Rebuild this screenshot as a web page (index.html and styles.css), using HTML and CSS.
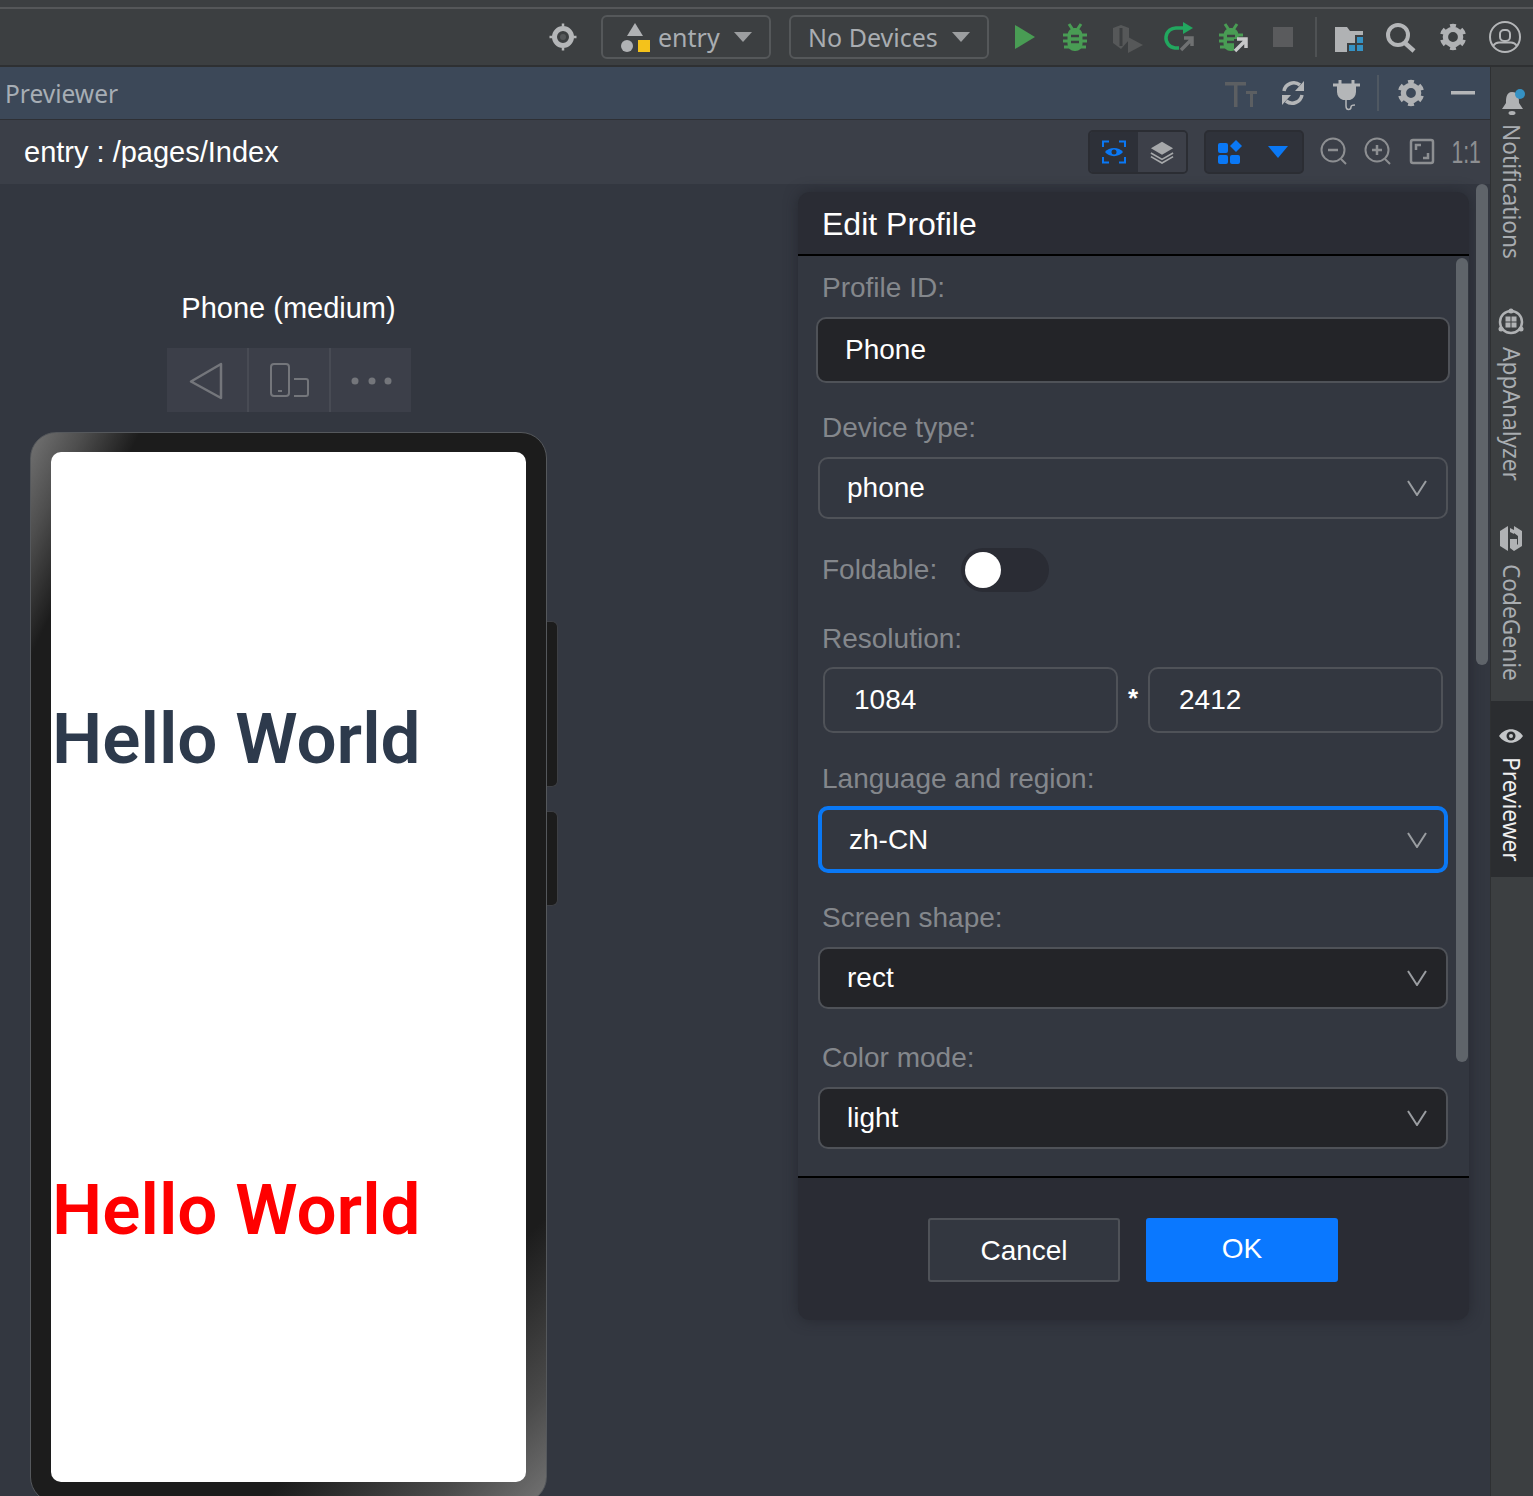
FILE: index.html
```html
<!DOCTYPE html>
<html lang="en">
<head>
<meta charset="utf-8">
<title>Previewer</title>
<link rel="stylesheet" href="styles.css">
</head>
<body>
<svg class="defs" aria-hidden="true">
  <symbol id="gear" viewBox="0 0 28 28">
    <circle cx="14" cy="14" r="7.6" fill="none" stroke="currentColor" stroke-width="5.400"/>
    <circle cx="14" cy="14" r="10.800" fill="none" stroke="currentColor" stroke-width="4.800" pathLength="60" stroke-dasharray="5 5" stroke-dashoffset="-2.5"/>
  </symbol>
  <symbol id="bug" viewBox="0 0 24 28">
    <path d="M6 1l4 6M18 1l-4 6M0 12h24M0 18h24M1 24h22" stroke="currentColor" stroke-width="3" fill="none"/>
    <rect x="4.500" y="5" width="15" height="23" rx="7" fill="currentColor"/>
    <path d="M8 13h8M8 19h8" stroke="#3c3f41" stroke-width="2.500"/>
  </symbol>
  <symbol id="chev" viewBox="0 0 20 16">
    <path d="M1 1l9 14 9-14" fill="none" stroke="#9a9da1" stroke-width="2"/>
  </symbol>
</svg>

<header class="toolbar-top"><div class="rule"></div>
  <div class="toolbar">
    <svg class="slot" viewBox="0 0 52 44"><g fill="none" stroke="#b4b6b8"><circle cx="26" cy="22" r="8.500" stroke-width="5"/><path d="M26 8.500v3M26 32.500v3M12.500 22h3M36.500 22h3" stroke-width="2.500"/></g><circle cx="26" cy="22" r="3" fill="#55585a"/></svg>
    <div class="combo combo-entry">
      <svg class="entry-ic" viewBox="0 0 30 32"><path d="M14 0l8 13H6z" fill="#b0b2b4"/><circle cx="6" cy="23" r="6" fill="#b0b2b4"/><rect x="17" y="17" width="12" height="12" fill="#f4c21b"/></svg>
      <span>entry</span><i class="caret"></i>
    </div>
    <div class="combo combo-dev"><span>No Devices</span><i class="caret"></i></div>
    <svg class="slot s-run" viewBox="0 0 52 44"><path d="M18 10l20 12-20 12z" fill="#499c54"/></svg>
    <svg class="slot" viewBox="0 0 52 44"><use href="#bug" x="14" y="8" width="24" height="28" color="#499c54"/></svg>
    <svg class="slot" viewBox="0 0 52 44"><path d="M12 13l8-3 8 3v12l-8 9-8-6z" fill="#565859"/><path d="M20 13v18" stroke="#3c3f41" stroke-width="3"/><path d="M27 22l15 8-15 8z" fill="#565859"/></svg>
    <svg class="slot" viewBox="0 0 52 44"><path d="M32 13h-8a10 10 0 0 0-2 20h4" fill="none" stroke="#22a75f" stroke-width="3.500"/><path d="M30 7l10 6-10 6z" fill="#22a75f"/><path d="M28 35l10-10M31 23h8v8" fill="none" stroke="#6f7172" stroke-width="3.500"/></svg>
    <svg class="slot s-attach" viewBox="0 0 52 44"><use href="#bug" x="14" y="8" width="24" height="28" color="#499c54"/><path d="M29 24h16v14H29z" fill="#3c3f41"/><path d="M30 36l10-10M32 24h9v9" fill="none" stroke="#c7c8c9" stroke-width="3.500"/></svg>
    <svg class="slot" viewBox="0 0 52 44"><rect x="16" y="12" width="20" height="20" fill="#5a5b5d"/></svg>
    <i class="tb-div"></i>
    <svg class="slot" viewBox="0 0 52 44"><path d="M12 12h12l3 4h13v21H12z" fill="#b0b2b4"/><path d="M24 28h18v12H24zM32 20h10v8H32z" fill="#3c3f41"/><path d="M34 22h6v6h-6zM26 30h6v6h-6zM34 30h6v6h-6z" fill="#3592c4"/></svg>
    <svg class="slot" viewBox="0 0 52 44"><circle cx="23" cy="20" r="10" fill="none" stroke="#b4b6b8" stroke-width="4"/><path d="M30 28l9 8" stroke="#b4b6b8" stroke-width="4.500"/></svg>
    <svg class="slot" viewBox="0 0 52 44"><use href="#gear" x="12" y="8" width="28" height="28" color="#b0b2b4"/></svg>
    <svg class="slot" viewBox="0 0 52 44"><g fill="none" stroke="#b4b6b8" stroke-width="2"><circle cx="26" cy="22" r="15"/><rect x="21" y="15" width="10" height="11" rx="4"/><path d="M14 31c2-3 4-3.500 6-3.500h12c2 0 4 .5 6 3.500"/></g></svg>
  </div>
</header>

<div class="main">
  <div class="workspace">
    <div class="panel-head">
      <span class="panel-title">Previewer</span>
      <svg class="slot" viewBox="0 0 52 44"><path d="M10 11h21v3.500H22.500V36H19V14.500H10z" fill="#5c5f62"/><path d="M31 20h11v3h-4v13h-3V23h-4z" fill="#5c5f62"/></svg>
      <svg class="slot" viewBox="0 0 52 44"><g fill="none" stroke="#b4b6b8" stroke-width="3.500"><path d="M17 20a10 10 0 0 1 16-6"/><path d="M35 24a10 10 0 0 1-16 6"/></g><path d="M37 10v10h-9zM15 34V24h9z" fill="#b4b6b8"/></svg>
      <svg class="slot" viewBox="0 0 52 44"><path d="M14 14h27M21 9v5M34 9v5" stroke="#b4b6b8" stroke-width="3"/><path d="M18 15h19v6a9 9 0 0 1-6 8h-7a9 9 0 0 1-6-8z" fill="#b4b6b8"/><path d="M27 29v6c0 5 5 4 5 1 0-2 2-2 4-2" fill="none" stroke="#b4b6b8" stroke-width="1.500"/></svg>
      <i class="head-div"></i>
      <svg class="slot" viewBox="0 0 52 44"><use href="#gear" x="12" y="8" width="28" height="28" color="#b0b2b4"/></svg>
      <svg class="slot" viewBox="0 0 52 44"><rect x="14" y="20" width="24" height="3.500" fill="#b4b6b8"/></svg>
    </div>

    <div class="crumbs">
      <span class="crumb-text">entry : /pages/Index</span>
      <div class="seg seg-view">
        <div class="seg-cell seg-on"><svg class="seg-ic" viewBox="0 0 24 24"><path d="M1 7V1.500h6M17 1.500h6V7M23 17v5.500h-6M7 22.500H1V17" fill="none" stroke="#0a78f5" stroke-width="2"/><path d="M3 12c4-5.500 14-5.500 18 0-4 5.500-14 5.500-18 0z" fill="#0a78f5"/><circle cx="12" cy="12" r="2.500" fill="#2d3038"/></svg></div>
        <div class="seg-cell"><svg class="seg-ic" viewBox="0 0 26 24"><path d="M13 1l12 7-12 7-12-7z" fill="#a6a8aa"/><path d="M1 13l12 7 12-7M1 17l12 7 12-7" fill="none" stroke="#a6a8aa" stroke-width="1.800"/></svg></div>
      </div>
      <div class="seg seg-dev">
        <div class="seg-cell"><svg class="seg-ic" viewBox="0 0 24 24"><rect x="0" y="3" width="10" height="10" rx="2" fill="#0a78f5"/><rect x="0" y="15" width="10" height="9" rx="2" fill="#0a78f5"/><rect x="12" y="15" width="10" height="9" rx="2" fill="#0a78f5"/><path d="M18 0l6 6-6 6-6-6z" fill="#0a78f5"/></svg></div>
        <div class="seg-cell"><svg class="seg-ic" viewBox="0 0 24 24"><path d="M2 6h20L12 18z" fill="#0a78f5"/></svg></div>
      </div>
      <svg class="zoom-ic" viewBox="0 0 44 44"><g fill="none" stroke="#8d8f92" stroke-width="2"><circle cx="21" cy="20" r="11.500"/><path d="M29 29l5 5"/><path d="M16 20h10" stroke-width="2.500"/></g></svg>
      <svg class="zoom-ic" viewBox="0 0 44 44"><g fill="none" stroke="#8d8f92" stroke-width="2"><circle cx="21" cy="20" r="11.500"/><path d="M29 29l5 5"/><path d="M16 20h10M21 15v10" stroke-width="2.500"/></g></svg>
      <svg class="zoom-ic" viewBox="0 0 44 44"><rect x="11" y="10" width="22" height="23" rx="2" fill="none" stroke="#8d8f92" stroke-width="2.500"/><path d="M16 20v-5h5M28 23v5h-5" fill="none" stroke="#8d8f92" stroke-width="2.500"/></svg>
      <span class="one-one">1:1</span>
    </div>

    <div class="content">
      <section class="stage">
        <div class="device-name">Phone (medium)</div>
        <div class="device-tools">
          <div class="tool"><svg class="tool-ic" viewBox="0 0 44 44"><path d="M36 6L6 23.500 36 40z" fill="none" stroke="#74767b" stroke-width="2.500" stroke-linejoin="round"/></svg></div>
          <div class="tool"><svg class="tool-ic" viewBox="0 0 44 44"><rect x="4" y="6" width="18" height="32" rx="3" fill="none" stroke="#74767b" stroke-width="2"/><path d="M11 33h4" stroke="#74767b" stroke-width="2"/><path d="M27 21h12a2 2 0 0 1 2 2v13a2 2 0 0 1-2 2H27" fill="none" stroke="#74767b" stroke-width="2"/></svg></div>
          <div class="tool"><svg class="tool-ic" viewBox="0 0 44 44"><circle cx="6" cy="23" r="3.500" fill="#74767b"/><circle cx="23" cy="23" r="3.500" fill="#74767b"/><circle cx="39" cy="23" r="3.500" fill="#74767b"/></svg></div>
        </div>
        <div class="phone-row">
          <div class="phone">
            <div class="screen">
              <p class="hello hello-dark">Hello World</p>
              <p class="hello hello-red">Hello World</p>
            </div>
          </div>
          <div class="side-keys"><i class="key key-long"></i><i class="key key-short"></i></div>
        </div>
      </section>

      <section class="dialog">
        <h2 class="dlg-title">Edit Profile</h2>
        <div class="dlg-body">
          <i class="dlg-scroll"></i>
          <label class="lbl lbl-first">Profile ID:</label>
          <div class="ctl ctl-input ctl-dark"><span>Phone</span></div>
          <label class="lbl lbl-device">Device type:</label>
          <div class="ctl ctl-select"><span>phone</span><svg class="chev"><use href="#chev"/></svg></div>
          <div class="fold-row"><label class="lbl-inline">Foldable:</label><div class="toggle"><i class="knob"></i></div></div>
          <label class="lbl lbl-res">Resolution:</label>
          <div class="res-row">
            <div class="res-box">1084</div>
            <span class="res-x">*</span>
            <div class="res-box">2412</div>
          </div>
          <label class="lbl lbl-lang">Language and region:</label>
          <div class="ctl ctl-select ctl-focus"><span>zh-CN</span><svg class="chev"><use href="#chev"/></svg></div>
          <label class="lbl lbl-shape">Screen shape:</label>
          <div class="ctl ctl-select ctl-dark"><span>rect</span><svg class="chev"><use href="#chev"/></svg></div>
          <label class="lbl lbl-color">Color mode:</label>
          <div class="ctl ctl-select ctl-dark"><span>light</span><svg class="chev"><use href="#chev"/></svg></div>
        </div>
        <div class="dlg-foot">
          <button class="btn btn-cancel">Cancel</button>
          <button class="btn btn-ok">OK</button>
        </div>
      </section>

      <i class="outer-scroll"></i>
    </div>
  </div>

  <aside class="strip">
    <div class="strip-item it-notif">
      <svg class="st-ic st-bell" viewBox="0 0 26 28"><path d="M12 4C6 4 6 11 6 15l-4 6h21l-4-6c0-4 0-11-7-11z" fill="#b0b2b4"/><ellipse cx="12" cy="25" rx="3.500" ry="2" fill="#b0b2b4"/><circle cx="20" cy="6" r="5" fill="#3592c4"/></svg>
      <span class="st-text">Notifications</span>
    </div>
    <div class="strip-item it-app">
      <svg class="st-ic st-app" viewBox="0 0 28 28"><circle cx="14" cy="14" r="11" fill="none" stroke="#b0b2b4" stroke-width="2.500"/><circle cx="14" cy="3" r="2.500" fill="#b0b2b4"/><circle cx="4" cy="21" r="2.500" fill="#b0b2b4"/><circle cx="24" cy="21" r="2.500" fill="#b0b2b4"/><path d="M8.500 8.500h5v5h-5zM14.500 8.500h5v5h-5zM8.500 14.500h5v5h-5zM14.500 14.500h5v5h-5z" fill="#b0b2b4"/></svg>
      <span class="st-text">AppAnalyzer</span>
    </div>
    <div class="strip-item it-genie">
      <svg class="st-ic st-genie" viewBox="0 0 24 26"><path d="M9 0v25l-8-5V5z" fill="#b0b2b4"/><path d="M11 2l4 2v4l-4-2z" fill="#b0b2b4"/><path d="M15 0l8 5v15l-8 5-4-3v-9h7v6l1-1v-8l-4-3z" fill="#b0b2b4"/></svg>
      <span class="st-text">CodeGenie</span>
    </div>
    <div class="strip-item it-prev">
      <svg class="st-ic st-eye" viewBox="0 0 26 16"><path d="M1 8c6-9 18-9 24 0-6 9-18 9-24 0z" fill="#c4c6c8"/><circle cx="13" cy="8" r="4.500" fill="#2b2d30"/><circle cx="13" cy="8" r="2" fill="#c4c6c8"/></svg>
      <span class="st-text st-active">Previewer</span>
    </div>
  </aside>
</div>
</body>
</html>
```

FILE: styles.css
```css
* { box-sizing: border-box; }
html, body { margin: 0; padding: 0; }
body {
  width: 1533px;
  height: 1496px;
  overflow: hidden;
  background: #333740;
  font-family: "Liberation Sans", Arial, sans-serif;
  color: #fff;
}
.defs { position: absolute; width: 0; height: 0; }
.slot { width: 52px; height: 44px; flex: none; display: block; }

/* top toolbar */
.toolbar-top { height: 67px; background: #3c3f41; border-bottom: 2px solid #2e3032; padding-top: 7px; }
.rule { height: 2px; background: #555759; }
.toolbar { display: flex; align-items: center; justify-content: flex-end; height: 56px; padding: 0 2px 0 0; }
.combo {
  display: flex; align-items: center; height: 44px; margin-right: 18px;
  border: 2px solid #55585a; border-radius: 6px;
  font-family: "Noto Sans", sans-serif; font-size: 25px; color: #a9adb1;
}
.combo-entry { width: 170px; padding-left: 18px; margin-left: 12px; }
.combo-dev { width: 200px; padding-left: 17px; margin-right: 8px; }
.entry-ic { width: 30px; height: 32px; margin: 4px 7px 0 0; flex: none; }
.caret { width: 0; height: 0; margin-left: 14px; border: 9px solid transparent; border-top: 10px solid #9c9ea0; border-bottom: 0; }
.tb-div { width: 2px; height: 40px; margin: 0 6px; background: #4f5254; }

/* layout */
.main { display: flex; height: 1429px; }
.workspace { width: 1490px; flex: none; display: flex; flex-direction: column; }

.panel-head { height: 53px; flex: none; display: flex; align-items: center; padding-right: 1px; background: #3c4858; border-bottom: 1px solid #2e3035; }
.panel-title { margin: 0 auto 0 5px; font-family: "Noto Sans", sans-serif; font-size: 24.500px; color: #a7aeb5; }
.head-div { width: 2px; height: 36px; margin: 0 6px; background: #4f5862; }

.crumbs { height: 64px; flex: none; display: flex; align-items: center; padding-right: 2px; background: #3b3f48; }
.crumb-text { margin: 0 auto 0 24px; font-size: 29px; }
.seg { display: flex; width: 100px; height: 44px; border: 2px solid #2b2d33; border-radius: 5px; overflow: hidden; margin-right: 16px; }
.seg-dev { margin-right: 8px; background: #2f323a; }
.seg-cell { flex: 1; display: flex; align-items: center; justify-content: center; background: #3d4049; }
.seg-dev .seg-cell { background: #2f323a; }
.seg-on { background: #2d3038; }
.seg-ic { width: 24px; height: 24px; }
.zoom-ic { width: 44px; height: 44px; flex: none; }
.one-one { width: 44px; text-align: center; font-size: 32px; line-height: 44px; color: #8d8f92; transform: scaleX(.66); }

.content { flex: 1; display: flex; align-items: flex-start; min-height: 0; }

/* device stage */
.stage { width: 798px; flex: none; padding: 108px 0 0 30px; }
.device-name { width: 517px; text-align: center; font-size: 29px; line-height: 32px; }
.device-tools { width: 244px; height: 64px; margin: 24px 0 20px 137px; display: flex; gap: 2px; background: #484b54; }
.tool { flex: 1; display: flex; align-items: center; justify-content: center; background: #3c3f49; }
.tool-ic { width: 44px; height: 44px; }
.phone-row { display: flex; }
.phone {
  width: 517px; height: 1071px; padding: 19px 20px 20px 20px; flex: none;
  border: 1px solid #55585c; border-radius: 26px;
  background:
    linear-gradient(116deg, #737373 0, rgba(90,90,90,.8) 5%, rgba(28,28,28,0) 10.500%),
    linear-gradient(135deg, rgba(28,28,28,0) 82%, #4a4a4a 93%, #737373 100%),
    #1c1c1c;
}
.screen {
  height: 100%; background: #fff; border-radius: 10px;
  display: flex; flex-direction: column; gap: 377px; padding-top: 240px;
}
.hello { margin: 0; padding-left: 1px; font-family: Roboto, sans-serif; font-weight: 600; font-size: 71px; line-height: 94px; white-space: nowrap; }
.hello-dark { color: #2d3a4c; }
.hello-red { color: #ff0000; }
.side-keys { display: flex; flex-direction: column; gap: 24px; padding-top: 189px; }
.key { display: block; width: 11px; background: #1c1c1c; border-radius: 0 6px 6px 0; border: 1px solid #3d3f44; border-left: 0; }
.key-long { height: 166px; }
.key-short { height: 95px; }

/* dialog */
.dialog {
  width: 671px; flex: none; margin-top: 8px;
  border-radius: 12px; overflow: hidden;
  box-shadow: 0 0 14px rgba(30, 32, 38, .6);
  background: #2a2c34;
}
.dlg-title { margin: 0; height: 62px; padding-left: 24px; font-size: 32px; font-weight: 400; line-height: 65px; }
.dlg-body {
  position: relative; height: 924px; padding-top: 15px;
  border-top: 2px solid #000; border-bottom: 2px solid #000;
  background: #333740;
}
.dlg-scroll { position: absolute; left: 658px; top: 2px; width: 12px; height: 804px; border-radius: 6px; background: #5f646a; }
.lbl { display: block; margin: 0 0 -2px 24px; font-size: 28px; line-height: 34px; color: #84878c; }
.lbl-device { margin-top: 28px; }
.lbl-res { margin-top: 30px; }
.lbl-lang { margin-top: 29px; }
.lbl-shape { margin: 29px 0 0 24px; line-height: 32px; }
.lbl-color { margin: 33px 0 0 24px; line-height: 32px; }
.ctl {
  display: flex; align-items: center; justify-content: space-between;
  font-size: 28px; border: 2px solid #4f5258; border-radius: 10px; color: #fff;
}
.ctl-input { width: 634px; height: 66px; margin: 14px 0 0 18px; padding-left: 27px; }
.ctl-select { width: 630px; height: 62px; margin: 13px 0 0 20px; padding: 0 19px 0 27px; }
.lbl-device + .ctl { margin-top: 14px; }
.ctl-dark { background: #232428; }
.ctl-focus { height: 67px; margin-top: 12px; border: 4px solid #0a78f5; padding-left: 27px; padding-right: 17px; }
.chev { width: 20px; height: 16px; display: block; }
.fold-row { display: flex; align-items: center; height: 44px; margin: 29px 0 0 24px; }
.lbl-inline { font-size: 28px; color: #84878c; margin-right: 24px; }
.toggle { display: flex; align-items: center; width: 88px; height: 44px; padding-left: 4px; border-radius: 22px; background: #2a2c34; }
.knob { width: 36px; height: 36px; border-radius: 50%; background: #fff; }
.res-row { display: flex; align-items: flex-start; margin: 13px 0 0 25px; }
.res-box { width: 295px; height: 66px; padding-left: 29px; line-height: 62px; font-size: 28px; border: 2px solid #4f5258; border-radius: 10px; }
.res-x { width: 30px; text-align: center; font-size: 26px; font-weight: 700; line-height: 62px; }

.dlg-foot { height: 142px; display: flex; justify-content: center; gap: 26px; padding: 40px 1px 0 0; }
.btn { width: 192px; height: 64px; border-radius: 3px; font: 400 28px "Liberation Sans", Arial, sans-serif; color: #fff; padding: 0; }
.btn-cancel { background: #333740; border: 2px solid #4f5258; padding-top: 2px; }
.btn-ok { background: #0a78ff; border: 0; padding-bottom: 2px; }

.outer-scroll { display: block; width: 12px; height: 481px; margin-left: 7px; border-radius: 6px; background: #5f646a; flex: none; }

/* right strip */
.strip { width: 43px; flex: none; background: #3c3f41; border-left: 1px solid #2e3032; padding-top: 21px; }
.strip-item { display: flex; flex-direction: column; align-items: center; padding-right: 2px; }
.st-text { writing-mode: vertical-rl; font-family: "Noto Sans", sans-serif; font-size: 22.700px; line-height: 28px; color: #a9adb1; }
.st-active { color: #f0f0f0; }
.st-ic { display: block; flex: none; }
.st-bell { width: 26px; height: 28px; margin: 0 0 8px 3px; }
.st-app { width: 28px; height: 28px; margin: 0 0 11px; }
.st-genie { width: 24px; height: 26px; margin-bottom: 12px; }
.st-eye { width: 26px; height: 16px; margin-bottom: 13px; }
.it-app { margin-top: 49px; }
.it-genie { margin-top: 45px; }
.it-prev { margin-top: 20px; height: 176px; padding-top: 27px; background: #2b2d30; }
```
